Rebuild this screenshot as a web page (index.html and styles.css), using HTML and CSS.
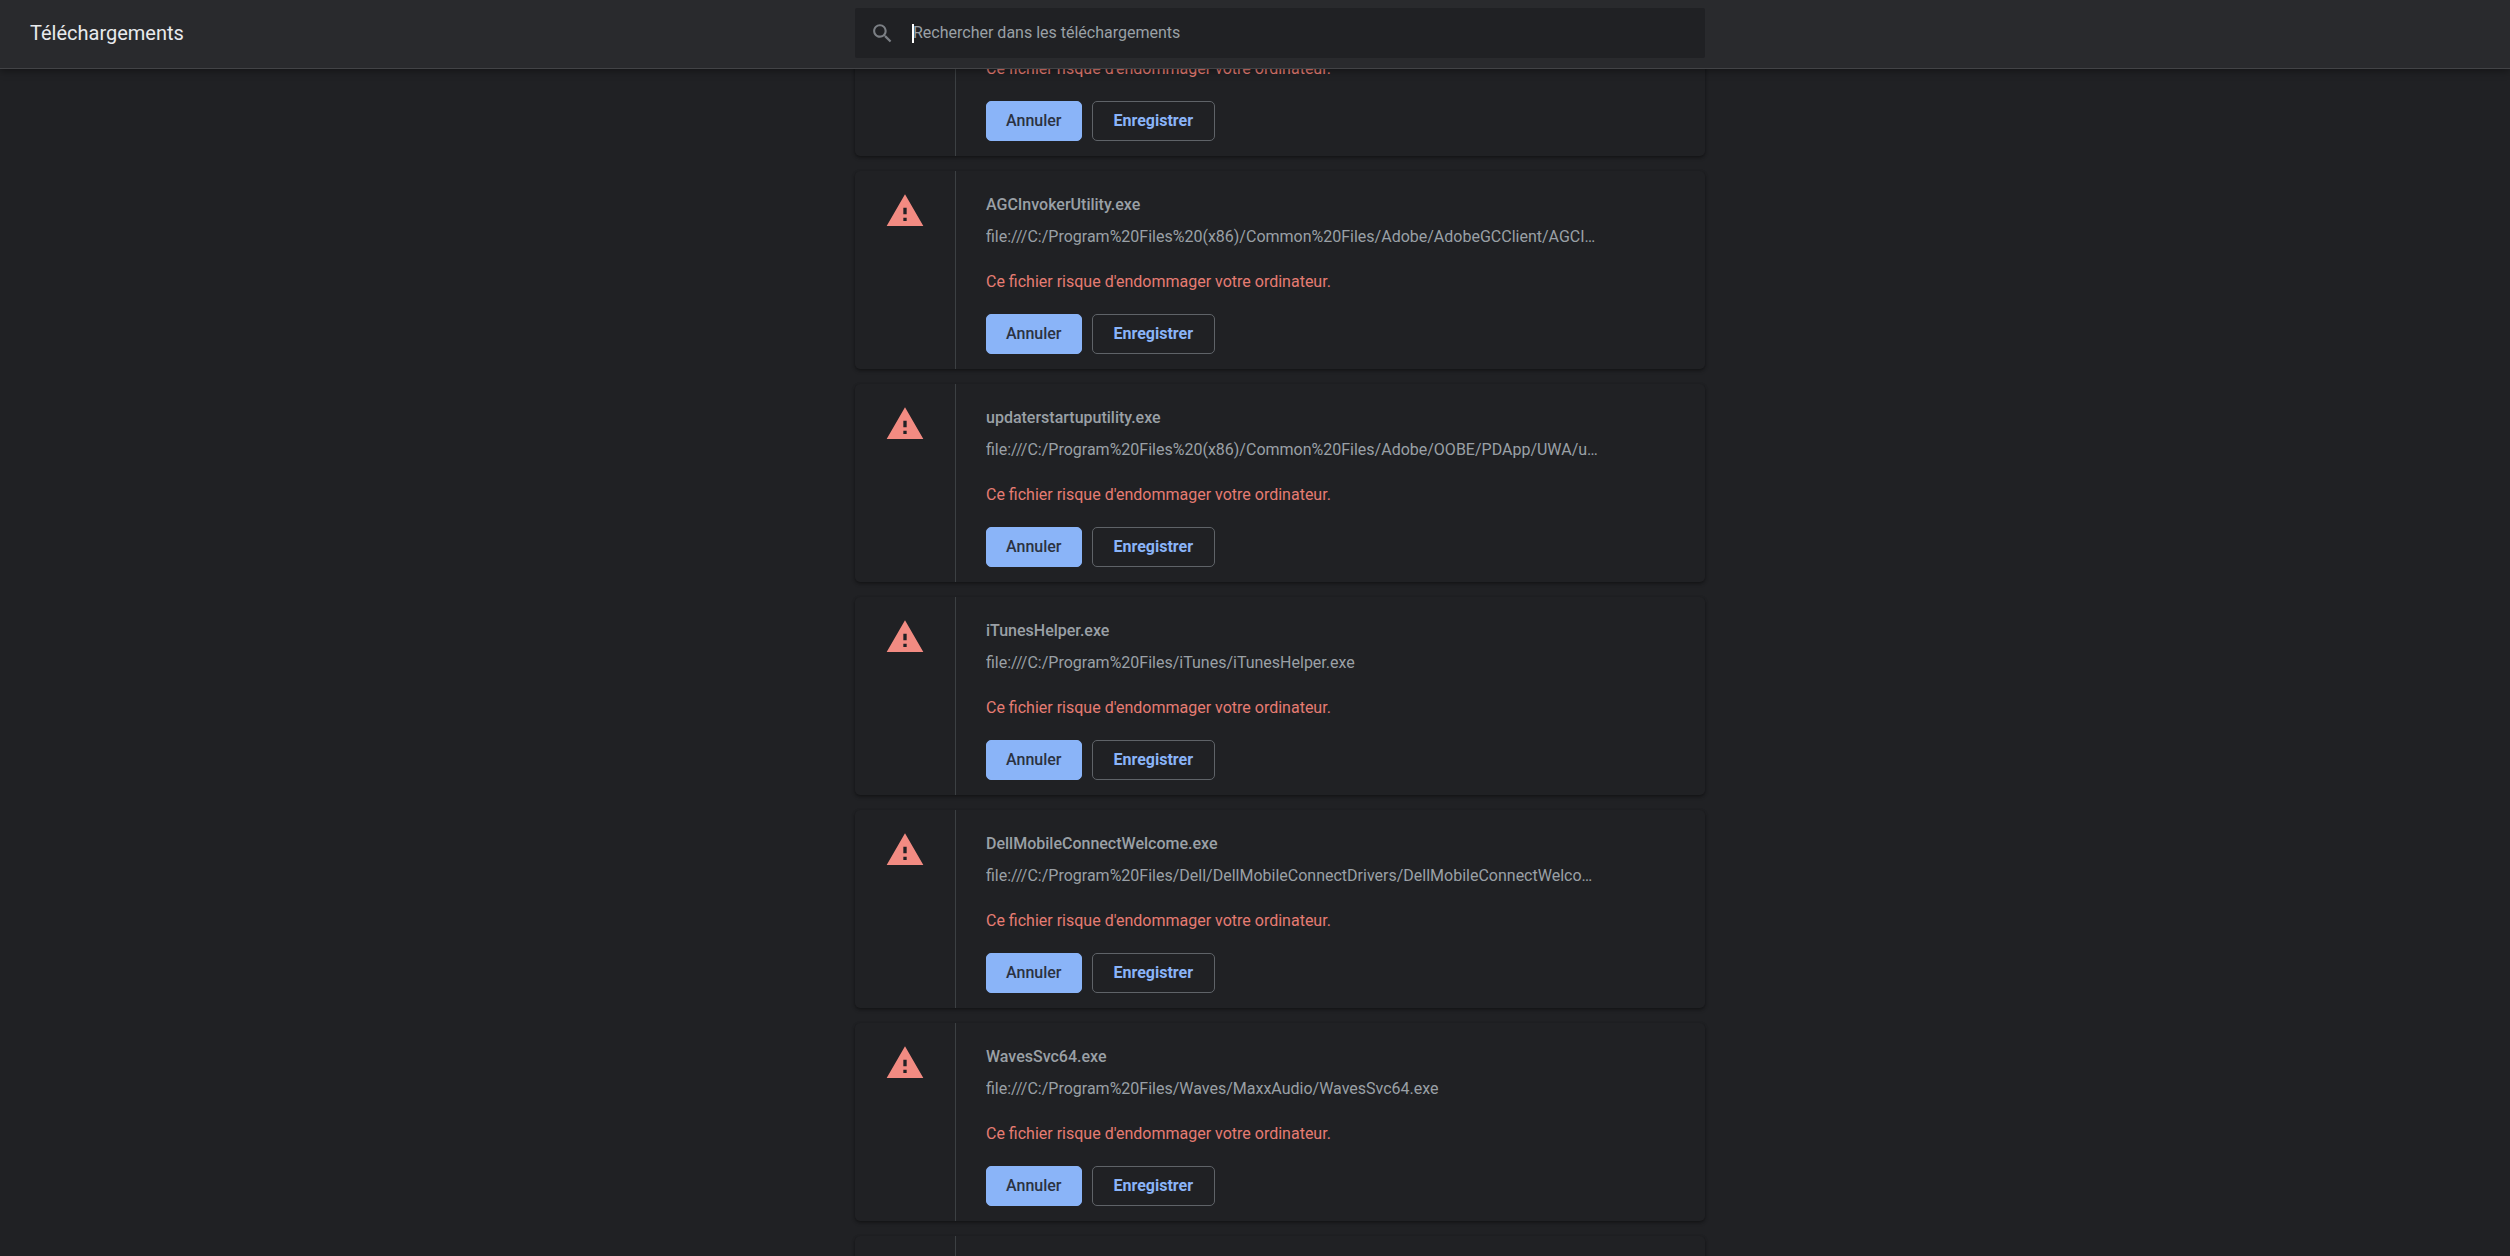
FILE: index.html
```html
<!DOCTYPE html>
<html lang="fr">
<head>
<meta charset="utf-8">
<title>Téléchargements</title>
<link rel="stylesheet" href="styles.css">
</head>
<body>
<svg class="sprite" width="0" height="0" aria-hidden="true">
  <symbol id="warning" viewBox="0 0 24 24"><path d="M1 21h22L12 2 1 21zm12-3h-2v-2h2v2zm0-4h-2v-4h2v4z"/></symbol>
</svg>
<header class="toolbar">
  <h1 class="toolbar-title">Téléchargements</h1>
  <label class="search">
    <svg class="search-icon" viewBox="0 0 24 24" aria-hidden="true"><path d="M15.5 14h-.79l-.28-.27C15.41 12.59 16 11.11 16 9.5 16 5.91 13.09 3 9.5 3S3 5.91 3 9.5 5.91 16 9.5 16c1.61 0 3.09-.59 4.23-1.57l.27.28v.79l5 4.99L20.49 19l-4.99-5zm-6 0C7.01 14 5 11.99 5 9.5S7.01 5 9.5 5 14 7.01 14 9.5 11.99 14 9.5 14z"/></svg>
    <span class="search-field">
      <input class="search-input" type="search" placeholder="Rechercher dans les téléchargements">
      <span class="caret"></span>
    </span>
  </label>
</header>
<main class="downloads">
  <div class="list">
    <article class="card card-first">
      <div class="card-icon"></div>
      <div class="card-body">
        <p class="danger">Ce fichier risque d'endommager votre ordinateur.</p>
        <div class="actions"><button class="btn btn-primary">Annuler</button><button class="btn">Enregistrer</button></div>
      </div>
    </article>
    <article class="card">
      <div class="card-icon"><svg class="warning"><use href="#warning"/></svg></div>
      <div class="card-body">
        <h2 class="name">AGCInvokerUtility.exe</h2>
        <p class="url">file:///C:/Program%20Files%20(x86)/Common%20Files/Adobe/AdobeGCClient/AGCI…</p>
        <p class="danger">Ce fichier risque d'endommager votre ordinateur.</p>
        <div class="actions"><button class="btn btn-primary">Annuler</button><button class="btn">Enregistrer</button></div>
      </div>
    </article>
    <article class="card">
      <div class="card-icon"><svg class="warning"><use href="#warning"/></svg></div>
      <div class="card-body">
        <h2 class="name">updaterstartuputility.exe</h2>
        <p class="url">file:///C:/Program%20Files%20(x86)/Common%20Files/Adobe/OOBE/PDApp/UWA/u…</p>
        <p class="danger">Ce fichier risque d'endommager votre ordinateur.</p>
        <div class="actions"><button class="btn btn-primary">Annuler</button><button class="btn">Enregistrer</button></div>
      </div>
    </article>
    <article class="card">
      <div class="card-icon"><svg class="warning"><use href="#warning"/></svg></div>
      <div class="card-body">
        <h2 class="name">iTunesHelper.exe</h2>
        <p class="url">file:///C:/Program%20Files/iTunes/iTunesHelper.exe</p>
        <p class="danger">Ce fichier risque d'endommager votre ordinateur.</p>
        <div class="actions"><button class="btn btn-primary">Annuler</button><button class="btn">Enregistrer</button></div>
      </div>
    </article>
    <article class="card">
      <div class="card-icon"><svg class="warning"><use href="#warning"/></svg></div>
      <div class="card-body">
        <h2 class="name">DellMobileConnectWelcome.exe</h2>
        <p class="url">file:///C:/Program%20Files/Dell/DellMobileConnectDrivers/DellMobileConnectWelco…</p>
        <p class="danger">Ce fichier risque d'endommager votre ordinateur.</p>
        <div class="actions"><button class="btn btn-primary">Annuler</button><button class="btn">Enregistrer</button></div>
      </div>
    </article>
    <article class="card">
      <div class="card-icon"><svg class="warning"><use href="#warning"/></svg></div>
      <div class="card-body">
        <h2 class="name">WavesSvc64.exe</h2>
        <p class="url">file:///C:/Program%20Files/Waves/MaxxAudio/WavesSvc64.exe</p>
        <p class="danger">Ce fichier risque d'endommager votre ordinateur.</p>
        <div class="actions"><button class="btn btn-primary">Annuler</button><button class="btn">Enregistrer</button></div>
      </div>
    </article>
    <article class="card">
      <div class="card-icon"></div>
      <div class="card-body"></div>
    </article>
  </div>
</main>
</body>
</html>
```
FILE: styles.css
```css
* { box-sizing: border-box; }

body {
  margin: 0;
  height: 100vh;
  display: flex;
  flex-direction: column;
  overflow: hidden;
  background: #202124;
  color: #9aa0a6;
  font: 16px/24px Roboto, sans-serif;
}

h1, h2, p { margin: 0; }

.sprite { display: none; }

/* Toolbar */
.toolbar {
  position: relative;
  z-index: 1;
  flex: none;
  display: grid;
  grid-template-columns: 1fr minmax(0, 850px) 1fr;
  align-items: center;
  padding: 8px 0 10px 50px;
  background: #292a2d;
  border-bottom: 1px solid #424346;
  box-shadow: 0 2px 8px rgba(0, 0, 0, .4);
}

.toolbar-title {
  margin-left: -20px;
  color: #e8eaed;
  font-size: 20px;
  font-weight: 400;
}

.search {
  display: flex;
  align-items: center;
  gap: 18px;
  height: 50px;
  padding: 0 15px;
  border-radius: 2px;
  background: #202124;
}

.search-icon {
  flex: none;
  width: 25px;
  height: 25px;
  fill: #7b7f84;
}

.search-field {
  position: relative;
  flex: 1;
  display: flex;
}

.search-input {
  width: 100%;
  padding: 0;
  border: 0;
  outline: 0;
  background: none;
  color: #e8eaed;
  font: inherit;
}

.search-input::placeholder { color: #9aa0a6; opacity: 1; }

.caret {
  position: absolute;
  left: -1px;
  top: 3px;
  width: 2px;
  height: 19px;
  background: #fff;
}

/* Download list */
.downloads {
  flex: 1;
  min-height: 0;
  overflow: hidden;
  display: flex;
  justify-content: center;
  padding-left: 50px;
}

.list {
  flex: 0 1 850px;
  min-width: 0;
  display: flex;
  flex-direction: column;
  gap: 15px;
}

.card {
  flex: none;
  display: flex;
  min-height: 198px;
  border-radius: 5px;
  background: #202124;
  box-shadow: 0 1px 3px rgba(0, 0, 0, .3), 0 2px 4px rgba(0, 0, 0, .2);
}

.card-first {
  min-height: 0;
  margin-top: -34px;
}

.card-icon {
  flex: none;
  width: 100px;
  padding: 20px 30px;
}

.warning {
  display: block;
  width: 40px;
  height: 40px;
  fill: #f28b82;
}

.card-body {
  flex: 1;
  min-width: 0;
  padding: 22px 100px 15px 30px;
  border-left: 1px solid #3c4043;
}

.name {
  margin-bottom: 8px;
  font-size: 16px;
  font-weight: 500;
}

.url {
  margin-bottom: 21px;
  overflow: hidden;
  white-space: nowrap;
}

.danger {
  margin-bottom: 20px;
  color: #e67c73;
}

.actions { display: flex; gap: 10px; }

.btn {
  height: 40px;
  padding: 0 21px;
  border: 1px solid #5f6368;
  border-radius: 5px;
  background: none;
  color: #8ab4f8;
  font: 700 16px/24px Roboto, sans-serif;
}

.btn-primary {
  padding: 0 19px;
  border-color: #8ab4f8;
  background: #8ab4f8;
  color: #2b3242;
  font-weight: 500;
}
```
